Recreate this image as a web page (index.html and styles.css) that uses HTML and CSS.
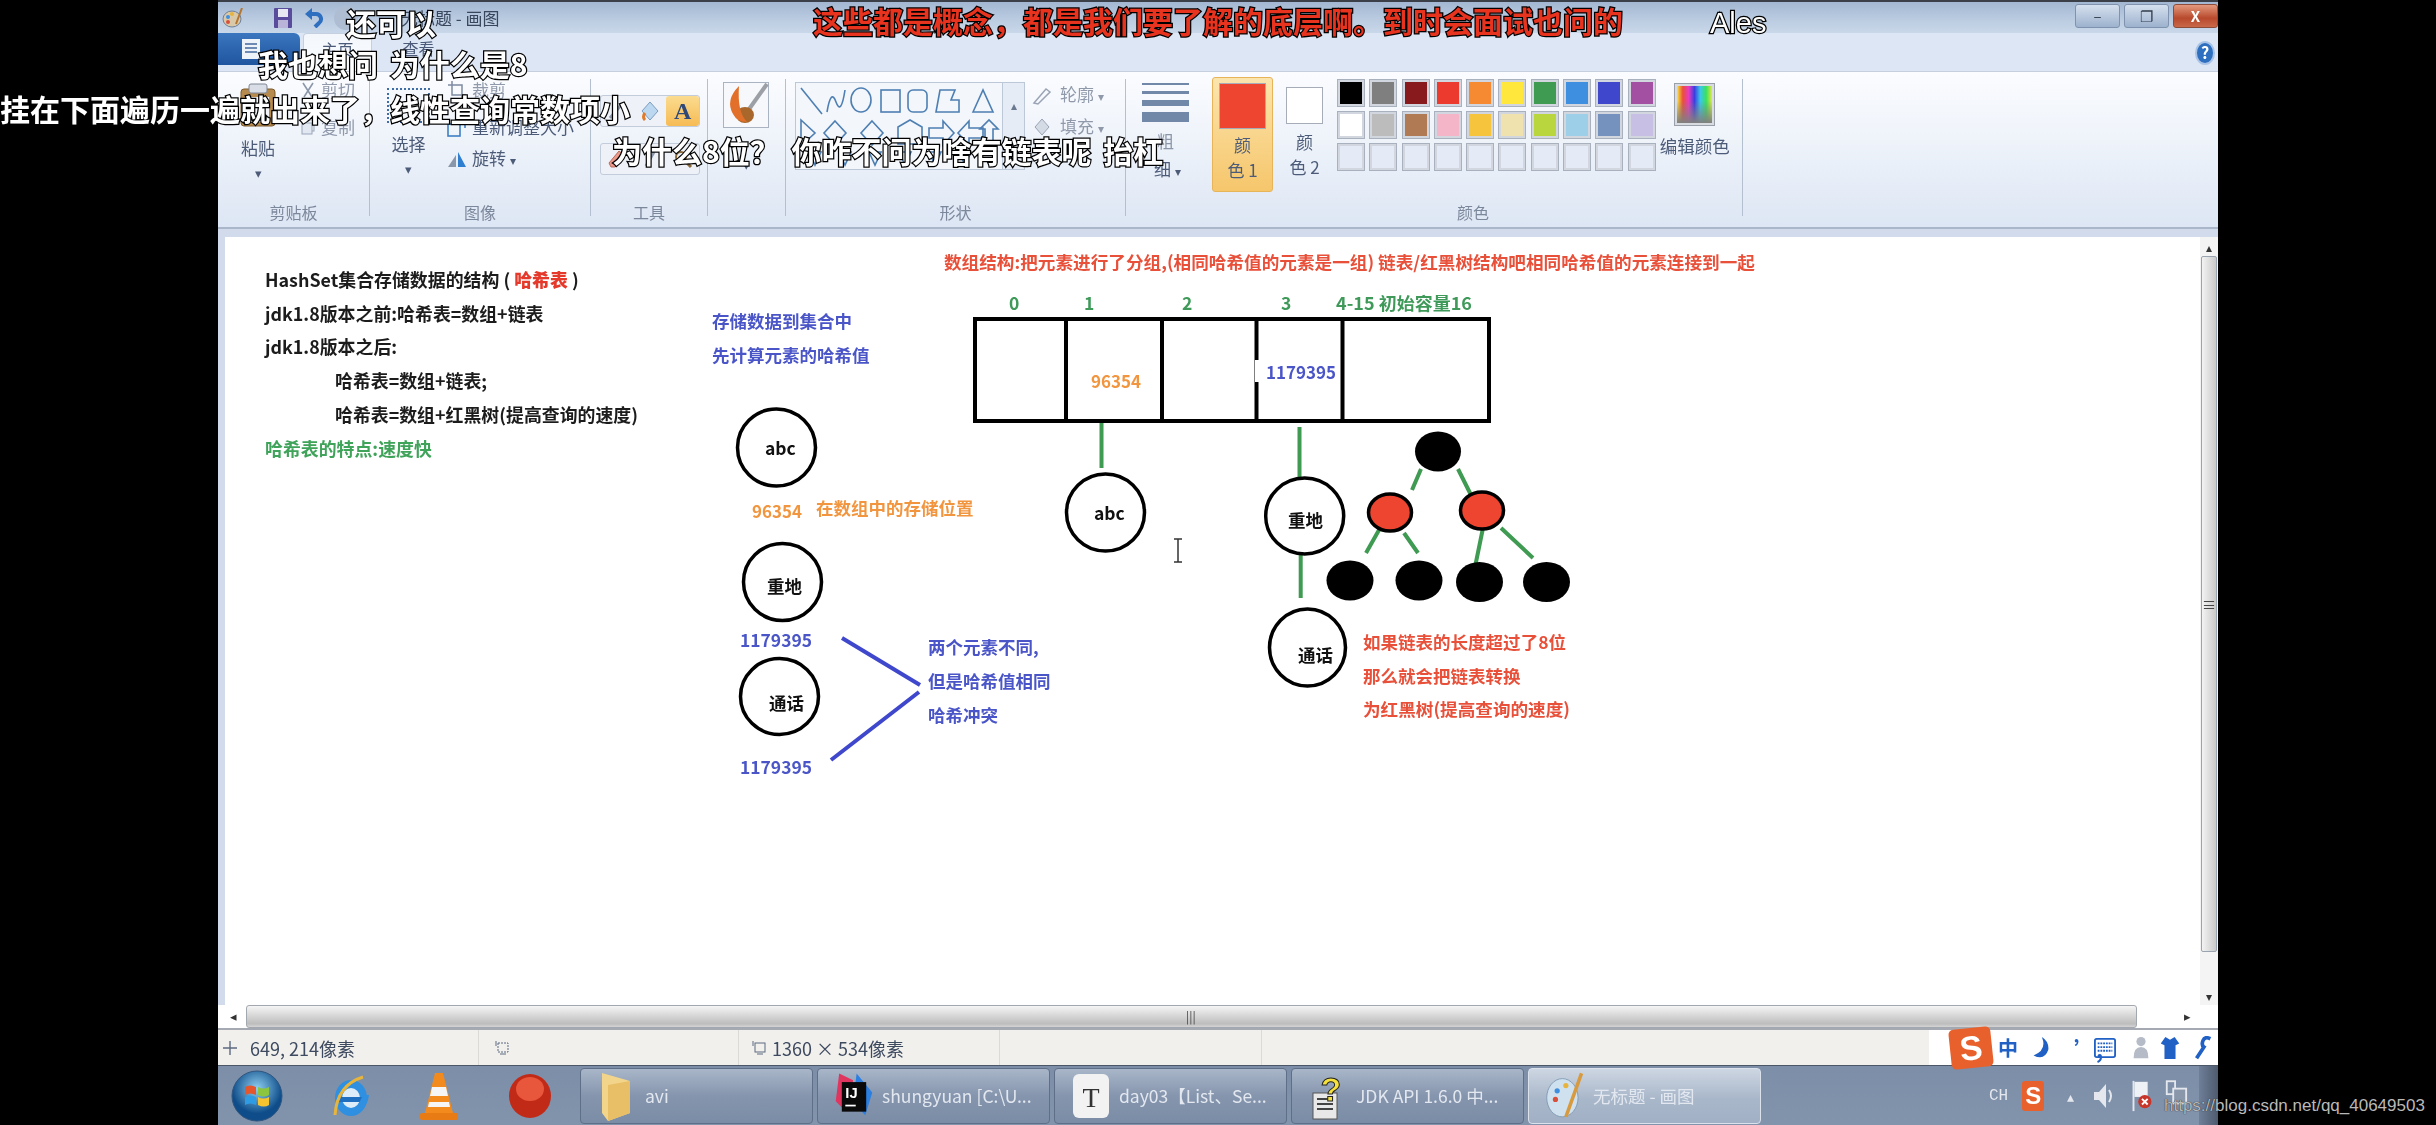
FILE: index.html
```html
<!DOCTYPE html>
<html lang="zh-CN">
<head>
<meta charset="utf-8">
<title>无标题 - 画图</title>
<link rel="stylesheet" href="styles.css">
</head>
<body>
<div class="stage">
  <div class="screen">
    <header class="titlebar">
      <svg class="qa qa-paint" viewBox="0 0 22 20"><ellipse cx="10" cy="11" rx="9" ry="8" fill="#d9c9a8" stroke="#6d7f99"/><circle cx="6" cy="9" r="2" fill="#3e8fe0"/><circle cx="10" cy="6" r="2" fill="#e8b33c"/><circle cx="6" cy="14" r="2" fill="#d9503a"/><path d="M20 0l-6 16" stroke="#b5752f" stroke-width="2"/></svg>
      <svg class="qa qa-save" viewBox="0 0 20 20"><rect x="1" y="0" width="18" height="20" rx="1" fill="#5a4c9c"/><rect x="5" y="1" width="10" height="8" fill="#e6e8f2"/><rect x="5" y="12" width="10" height="8" fill="#b9b4d8"/></svg>
      <svg class="qa qa-undo" viewBox="0 0 20 20"><path d="M3 6h9a5 5 0 0 1 3 9l-4 4" fill="none" stroke="#2f6fc0" stroke-width="4"/><path d="M8 0L1 6l7 6z" fill="#2f6fc0"/></svg>
      <span class="qa-redo"></span>
      <span class="wintitle">无标题 - 画图</span>
      <div class="winctl">
        <span class="wbtn">&#8211;</span>
        <span class="wbtn">&#10064;</span>
        <span class="wbtn wclose">X</span>
      </div>
    </header>

    <nav class="tabs">
      <span class="tab-file"><svg class="file-doc" viewBox="0 0 20 22"><rect x="1" y="1" width="18" height="20" fill="#eef3fa"/><path d="M4 6h12M4 10h12M4 14h12" stroke="#6d8ab5" stroke-width="2"/></svg></span>
      <span class="tab tab-on">主页</span>
      <span class="tab">查看</span>
      <svg class="help" viewBox="0 0 20 24"><ellipse cx="10" cy="12" rx="9" ry="11" fill="#2f6fc0" stroke="#a9c4e6" stroke-width="2"/><text x="10" y="18" text-anchor="middle" class="help-q">?</text></svg>
    </nav>

    <section class="ribbon">
      <div class="grp g-clip">
        <div class="grp-body">
          <div class="col-big col-paste">
            <svg class="ic-paste" viewBox="0 0 36 44"><rect x="1" y="6" width="34" height="37" rx="3" fill="#b78a4e" stroke="#7d5a2c"/><rect x="9" y="1" width="18" height="9" rx="2" fill="#d8dde6" stroke="#7f8794"/><rect x="7" y="14" width="22" height="25" fill="#f3f5f9"/></svg>
            <span class="rtxt big-label">粘贴</span>
            <span class="drop">&#9662;</span>
          </div>
          <div class="rows rows-clip">
            <span class="rrow"><svg class="ic16" viewBox="0 0 16 16"><path d="M3 1l9 14M13 1L4 15" stroke="#8c97a9" stroke-width="1.6"/></svg><span class="rtxt rtxt-dim">剪切</span></span>
            <span class="rrow"><svg class="ic16" viewBox="0 0 16 16"><rect x="4" y="1" width="10" height="11" fill="#eef2f8" stroke="#9aa6b8"/><rect x="2" y="4" width="10" height="11" fill="#e2e8f2" stroke="#9aa6b8"/></svg><span class="rtxt rtxt-dim">复制</span></span>
          </div>
        </div>
        <div class="grp-label">剪贴板</div>
      </div>

      <div class="grp g-image">
        <div class="grp-body">
          <div class="col-big col-select">
            <span class="ic-select"></span>
            <span class="rtxt big-label">选择</span>
            <span class="drop">&#9662;</span>
          </div>
          <div class="rows rows-image">
            <span class="rrow"><svg class="ic20" viewBox="0 0 20 20"><path d="M5 1v14h14M1 5h14v14" fill="none" stroke="#7d8ba3" stroke-width="1.5"/></svg><span class="rtxt rtxt-dim">裁剪</span></span>
            <span class="rrow"><svg class="ic20" viewBox="0 0 20 20"><rect x="1" y="7" width="12" height="12" fill="none" stroke="#3f7fc4" stroke-width="1.6"/><path d="M9 2h9v9" fill="none" stroke="#3f7fc4" stroke-width="1.6"/></svg><span class="rtxt">重新调整大小</span></span>
            <span class="rrow"><svg class="ic20" viewBox="0 0 20 20"><path d="M1 18L9 6v12z" fill="#8a97aa"/><path d="M11 3l8 15h-8z" fill="#2f7fd0"/></svg><span class="rtxt">旋转 <i class="drop-inline">&#9662;</i></span></span>
          </div>
        </div>
        <div class="grp-label">图像</div>
      </div>

      <div class="grp g-tools">
        <div class="grp-body tool-body">
          <div class="toolrow">
            <span class="tool"><svg class="ic20" viewBox="0 0 20 20"><path d="M3 17L15 3" stroke="#8c97a9" stroke-width="3"/></svg></span>
            <span class="tool"><svg class="ic20" viewBox="0 0 20 20"><path d="M10 1l8 9-8 9-8-9z" fill="#bcd7f0" stroke="#7d9cc0"/><path d="M5 12q-3 4 0 7" stroke="#e07b2e" stroke-width="3" fill="none"/></svg></span>
            <span class="tool tool-on">A</span>
          </div>
          <div class="toolrow">
            <span class="tool"><svg class="ic20" viewBox="0 0 20 20"><path d="M2 14L12 2l6 5L8 18H4z" fill="#eb9a8c" stroke="#b96a5c"/></svg></span>
            <span class="tool"><svg class="ic20" viewBox="0 0 20 20"><path d="M6 17L14 3" stroke="#8c97a9" stroke-width="3"/></svg></span>
            <span class="tool"><svg class="ic20" viewBox="0 0 20 20"><circle cx="8" cy="8" r="5" fill="#e8eef7" stroke="#8a6a3a" stroke-width="2"/><path d="M12 12l6 6" stroke="#8a6a3a" stroke-width="3"/></svg></span>
          </div>
        </div>
        <div class="grp-label">工具</div>
      </div>

      <div class="grp g-brush">
        <div class="grp-body col-big col-brush">
          <svg class="ic-brush" viewBox="0 0 46 46"><rect x=".5" y=".5" width="45" height="45" fill="#f6f8fb" stroke="#aab3c2"/><path d="M44 2L24 30" stroke="#9c9fa6" stroke-width="4"/><ellipse cx="22" cy="33" rx="9" ry="8" fill="#a9672c"/><path d="M16 4Q2 18 10 32q4 8 14 8Q14 30 16 4z" fill="#e2702a"/></svg>
          <span class="drop drop-brush">&#9662;</span>
        </div>
      </div>

      <div class="grp g-shapes">
        <div class="grp-body shapes-body">
          <svg class="ic-shapes" viewBox="0 0 208 88">
            <rect x=".5" y=".5" width="207" height="87" fill="#f3f6fb" stroke="#bcc7d8"/>
            <g fill="none" stroke="#4e7fb3" stroke-width="1.6">
              <path d="M6 6l21 26"/><path d="M32 30q4-24 9-10t9-12"/><ellipse cx="66" cy="18" rx="10" ry="12"/><rect x="86" y="8" width="19" height="22"/><rect x="113" y="8" width="19" height="22" rx="5"/><path d="M141 30l4-22h15l-4 10h8v12z"/><path d="M178 30l10-22 10 22z"/>
              <path d="M6 38v26l14-13z"/><path d="M40 39l11 12-11 12-11-12z"/><path d="M77 39l11 12-11 12-11-12z"/><path d="M103 45l12-7 12 7v17h-24z"/><path d="M134 46h14v-7l11 12-11 12v-7h-14z"/><path d="M188 46h-14v-7l-11 12 11 12v-7h14z"/><path d="M198 56v-9h5l-9-9-9 9h5v16h8z"/>
              <path d="M14 70l6 13 6-13zM44 70l6 13 6-13zM74 70l6 13 6-13zM104 70l6 13 6-13zM134 70l6 13 6-13zM164 70l6 13 6-13z"/>
            </g>
          </svg>
          <div class="shape-scroll"><span>&#9652;</span><span>&#9662;</span></div>
          <div class="rows rows-shape">
            <span class="rrow"><svg class="ic20" viewBox="0 0 20 20"><path d="M2 18L14 4l4 3-12 12z" fill="none" stroke="#9aa4b5" stroke-width="1.5"/></svg><span class="rtxt rtxt-dim">轮廓 <i class="drop-inline">&#9662;</i></span></span>
            <span class="rrow"><svg class="ic20" viewBox="0 0 20 20"><path d="M10 2l7 8-7 8-7-8z" fill="#d5dbe5" stroke="#9aa4b5"/></svg><span class="rtxt rtxt-dim">填充 <i class="drop-inline">&#9662;</i></span></span>
          </div>
        </div>
        <div class="grp-label">形状</div>
      </div>

      <div class="grp g-thick">
        <div class="grp-body col-big col-thick">
          <span class="tk tk1"></span><span class="tk tk2"></span><span class="tk tk3"></span><span class="tk tk4"></span>
          <span class="rtxt tk-label">粗</span>
          <span class="rtxt tk-label2">细 <i class="drop-inline">&#9662;</i></span>
        </div>
      </div>

      <div class="grp g-colors">
        <div class="grp-body colors-body">
          <div class="colorbtn colorbtn-on">
            <span class="cswatch cs-red"></span>
            <span class="rtxt">颜</span>
            <span class="rtxt">色 1</span>
          </div>
          <div class="colorbtn colorbtn-2">
            <span class="cswatch cs-white"></span>
            <span class="rtxt">颜</span>
            <span class="rtxt">色 2</span>
          </div>
          <div class="palette">
            <span class="sw c1"></span><span class="sw c2"></span><span class="sw c3"></span><span class="sw c4"></span><span class="sw c5"></span><span class="sw c6"></span><span class="sw c7"></span><span class="sw c8"></span><span class="sw c9"></span><span class="sw c10"></span>
            <span class="sw c11"></span><span class="sw c12"></span><span class="sw c13"></span><span class="sw c14"></span><span class="sw c15"></span><span class="sw c16"></span><span class="sw c17"></span><span class="sw c18"></span><span class="sw c19"></span><span class="sw c20"></span>
            <span class="sw"></span><span class="sw"></span><span class="sw"></span><span class="sw"></span><span class="sw"></span><span class="sw"></span><span class="sw"></span><span class="sw"></span><span class="sw"></span><span class="sw"></span>
          </div>
          <div class="editcol">
            <span class="rainbow"></span>
            <span class="rtxt">编辑颜色</span>
          </div>
        </div>
        <div class="grp-label">颜色</div>
      </div>
    </section>

    <main class="workspace">
      <div class="work-main">
        <div class="canvas">
          <div class="notes">
            <p>HashSet集合存储数据的结构 ( <b class="red">哈希表</b> )</p>
            <p>jdk1.8版本之前:哈希表=数组+链表</p>
            <p>jdk1.8版本之后:</p>
            <p class="ind">哈希表=数组+链表;</p>
            <p class="ind">哈希表=数组+红黑树(提高查询的速度)</p>
            <p class="green">哈希表的特点:速度快</p>
          </div>
          <svg class="diagram" viewBox="225 237 1975 768">
            <g class="ln-black">
              <rect x="975" y="319" width="514" height="102"/>
              <path d="M1066 319v102M1162 319v102M1256.5 319v102M1342.5 319v102"/>
            </g>
            <rect x="1255" y="360" width="5" height="22" fill="#fff"/>
            <g class="ln-green">
              <path d="M1101.5 423v45M1299.5 427v50M1300.7 555v43"/>
              <path d="M1421 469l-9 21M1458 469l13 26M1379 530l-13 23M1404 533l14 20M1483 528l-8 39M1501 528l32 30"/>
            </g>
            <g class="ln-blue"><path d="M842 638l78 47M919 692l-88 68"/></g>
            <g class="circ">
              <ellipse cx="776.500" cy="447.500" rx="39" ry="38.500"/>
              <ellipse cx="782.500" cy="582" rx="39" ry="38.500"/>
              <ellipse cx="779.500" cy="696.500" rx="39" ry="38"/>
              <ellipse cx="1105.500" cy="512.500" rx="39" ry="38.500"/>
              <ellipse cx="1304.700" cy="516" rx="39" ry="38"/>
              <ellipse cx="1307.500" cy="647.500" rx="38" ry="38.500"/>
            </g>
            <g fill="#000">
              <ellipse cx="1438" cy="451.500" rx="23" ry="20"/>
              <ellipse cx="1350" cy="580.500" rx="23.500" ry="20"/>
              <ellipse cx="1419" cy="580.500" rx="23.500" ry="20"/>
              <ellipse cx="1479.500" cy="582" rx="23.500" ry="20"/>
              <ellipse cx="1546.500" cy="582" rx="23.500" ry="20"/>
            </g>
            <g class="redn">
              <ellipse cx="1390" cy="512.500" rx="21.500" ry="18.500"/>
              <ellipse cx="1482" cy="510.500" rx="21.500" ry="18.500"/>
            </g>
            <path class="ibeam" d="M1174 539h8M1178 539v23M1174 562h8"/>

            <text class="dt t-red" x="944" y="263" textLength="811" lengthAdjust="spacingAndGlyphs">数组结构:把元素进行了分组,(相同哈希值的元素是一组) 链表/红黑树结构吧相同哈希值的元素连接到一起</text>
            <text class="dt t-green" x="1009" y="304">0</text>
            <text class="dt t-green" x="1084" y="304">1</text>
            <text class="dt t-green" x="1182" y="304">2</text>
            <text class="dt t-green" x="1281" y="304">3</text>
            <text class="dt t-green" x="1336" y="304" textLength="136" lengthAdjust="spacingAndGlyphs">4-15 初始容量16</text>
            <text class="dt t-orange" x="1091" y="382" textLength="50" lengthAdjust="spacingAndGlyphs">96354</text>
            <text class="dt t-blue" x="1266" y="373" textLength="70" lengthAdjust="spacingAndGlyphs">1179395</text>

            <text class="dt t-blue" x="712" y="322">存储数据到集合中</text>
            <text class="dt t-blue" x="712" y="356">先计算元素的哈希值</text>
            <text class="dt t-black" x="765" y="449">abc</text>
            <text class="dt t-orange" x="752" y="512" textLength="50" lengthAdjust="spacingAndGlyphs">96354</text>
            <text class="dt t-orange" x="816" y="509">在数组中的存储位置</text>
            <text class="dt t-black" x="767" y="587">重地</text>
            <text class="dt t-blue" x="740" y="641" textLength="72" lengthAdjust="spacingAndGlyphs">1179395</text>
            <text class="dt t-black" x="769" y="704">通话</text>
            <text class="dt t-blue" x="740" y="768" textLength="72" lengthAdjust="spacingAndGlyphs">1179395</text>
            <text class="dt t-blue" x="928" y="648">两个元素不同,</text>
            <text class="dt t-blue" x="928" y="682">但是哈希值相同</text>
            <text class="dt t-blue" x="928" y="716">哈希冲突</text>

            <text class="dt t-black" x="1094" y="514">abc</text>
            <text class="dt t-black" x="1288" y="521">重地</text>
            <text class="dt t-black" x="1298" y="656">通话</text>
            <text class="dt t-red" x="1363" y="643" textLength="203" lengthAdjust="spacingAndGlyphs">如果链表的长度超过了8位</text>
            <text class="dt t-red" x="1363" y="677">那么就会把链表转换</text>
            <text class="dt t-red" x="1363" y="710" textLength="207" lengthAdjust="spacingAndGlyphs">为红黑树(提高查询的速度)</text>
          </svg>
        </div>
        <div class="vscroll">
          <span class="sc-arrow">&#9652;</span>
          <div class="vthumb"><span class="grip-v">&#8801;</span></div>
          <span class="sc-arrow sc-bottom">&#9662;</span>
        </div>
      </div>
      <div class="hscroll">
        <span class="sc-arrow-h">&#9666;</span>
        <div class="hthumb"><span class="grip-h">|||</span></div>
        <span class="sc-arrow-h">&#9656;</span>
      </div>
    </main>

    <footer class="status">
      <div class="st st-pos"><svg class="ic16" viewBox="0 0 16 16"><path d="M8 1v14M1 8h14" stroke="#5c6a80" stroke-width="1.4"/></svg><span>649, 214像素</span></div>
      <div class="st st-sel"><svg class="ic16" viewBox="0 0 16 16"><rect x="4" y="3" width="10" height="9" fill="none" stroke="#5c6a80" stroke-dasharray="2 1"/><path d="M2 1v5M6 14h6" stroke="#5c6a80"/></svg></div>
      <div class="st st-size"><svg class="ic16" viewBox="0 0 16 16"><rect x="4" y="3" width="10" height="9" fill="none" stroke="#5c6a80"/><path d="M2 1v5M6 14h6" stroke="#5c6a80"/></svg><span>1360 × 534像素</span></div>
      <div class="st st-blank"></div>
      <div class="st st-blank2"></div>
      <div class="ime">
        <span class="ime-s">S</span>
        <span class="ime-i ime-zh">中</span>
        <svg class="ime-ic" viewBox="0 0 20 26"><path d="M12 1q6 14-9 20q12 6 16-6Q20 6 12 1z" fill="#2160c4"/></svg>
        <span class="ime-i ime-comma">&#8217;,</span>
        <svg class="ime-ic ime-kb" viewBox="0 0 24 22"><rect x="1" y="1" width="22" height="20" rx="2" fill="none" stroke="#2160c4" stroke-width="2"/><path d="M4 6h16M4 10h16M4 14h16" stroke="#2160c4" stroke-width="2" stroke-dasharray="2 1"/></svg>
        <svg class="ime-ic ime-person" viewBox="0 0 20 26"><circle cx="10" cy="6" r="5" fill="#b5bcc8"/><path d="M2 24q0-12 8-12t8 12z" fill="#b5bcc8"/></svg>
        <svg class="ime-ic ime-shirt" viewBox="0 0 22 26"><path d="M6 1l5 3 5-3 5 7-4 2v15H5V10L1 8z" fill="#2160c4"/></svg>
        <svg class="ime-ic" viewBox="0 0 20 26"><path d="M18 3q-6-3-8 2t1 7L3 24" fill="none" stroke="#2160c4" stroke-width="4"/></svg>
      </div>
    </footer>

    <div class="taskbar">
      <svg class="orb" viewBox="0 0 52 52"><defs><radialGradient id="orbg" cx=".5" cy=".35"><stop offset="0" stop-color="#8fd0f0"/><stop offset="1" stop-color="#0f4d8a"/></radialGradient></defs><circle cx="26" cy="26" r="25" fill="url(#orbg)" stroke="#30557f"/><path d="M14 17q5-3 11 0v8q-6-3-11 0z" fill="#e5562d"/><path d="M27 17q5 3 11 0v8q-5 3-11 0z" fill="#8cc63f"/><path d="M14 27q5-3 11 0v8q-6-3-11 0z" fill="#2f9be3"/><path d="M27 27q5 3 11 0v8q-5 3-11 0z" fill="#f7c42f"/></svg>
      <svg class="pin pin-ie" viewBox="0 0 44 50"><ellipse cx="22" cy="27" rx="16" ry="18" fill="#2f8fe0"/><ellipse cx="22" cy="27" rx="9" ry="10" fill="#dcecf9"/><rect x="10" y="26" width="25" height="5" fill="#1f6fc0"/><path d="M34 24h6q-2 16-16 20" fill="#2f8fe0"/><path d="M34 6Q8 14 6 44" fill="none" stroke="#e8b53c" stroke-width="3"/></svg>
      <svg class="pin pin-vlc" viewBox="0 0 44 50"><path d="M18 2h8l10 40H8z" fill="#f28a1d"/><path d="M15 16h14l2 9H13z" fill="#f5f5f5"/><path d="M12 31h20l1 5H11z" fill="#f5f5f5"/><rect x="3" y="42" width="38" height="7" rx="2" fill="#e87b14"/></svg>
      <svg class="pin pin-ball" viewBox="0 0 44 50"><ellipse cx="22" cy="25" rx="21" ry="22" fill="#c22a18"/><ellipse cx="22" cy="18" rx="14" ry="12" fill="#e8573c"/></svg>

      <div class="task">
        <svg class="task-ic" viewBox="0 0 34 50"><path d="M2 2l28 8v32L8 50 2 42z" fill="#f2d58a"/><path d="M8 14l22-4v32L8 50z" fill="#e8bf66"/></svg>
        <span>avi</span>
      </div>
      <div class="task">
        <svg class="task-ic" viewBox="0 0 46 56"><path d="M6 2l16 8-8 36L2 34z" fill="#e0355f"/><path d="M26 2l18 22-8 26-14-14z" fill="#2b7fe0"/><rect x="9" y="12" width="28" height="34" fill="#0a0a0a"/><text x="13" y="30" class="ij-t">IJ</text><rect x="13" y="38" width="12" height="2" fill="#fff"/></svg>
        <span>shungyuan [C:\U...</span>
      </div>
      <div class="task">
        <svg class="task-ic" viewBox="0 0 40 50"><rect x="2" y="3" width="36" height="44" rx="6" fill="#f2f2f2"/><text x="20" y="36" text-anchor="middle" class="t-t">T</text></svg>
        <span>day03【List、Se...</span>
      </div>
      <div class="task">
        <svg class="task-ic" viewBox="0 0 34 50"><rect x="2" y="22" width="24" height="26" fill="#e8e8e8" stroke="#555"/><path d="M6 28h16M6 33h16M6 38h16" stroke="#444" stroke-width="2"/><text x="20" y="30" text-anchor="middle" class="q-t">?</text></svg>
        <span>JDK API 1.6.0 中...</span>
      </div>
      <div class="task task-on">
        <svg class="task-ic" viewBox="0 0 46 56"><ellipse cx="20" cy="30" rx="18" ry="22" fill="#cfe1ee" stroke="#7d97b0"/><circle cx="12" cy="32" r="3" fill="#d9503a"/><circle cx="14" cy="22" r="3" fill="#3e8fe0"/><circle cx="24" cy="16" r="3" fill="#e8b33c"/><path d="M42 2L24 52" stroke="#d79a3f" stroke-width="4"/></svg>
        <span>无标题 - 画图</span>
      </div>

      <div class="tray">
        <span class="tray-ch">CH</span>
        <span class="tray-s">S</span>
        <span class="tray-up">&#9652;</span>
        <svg class="tray-ic tray-spk" viewBox="0 0 24 30"><path d="M2 11h5l7-8v24l-7-8H2z" fill="#e4e8ee"/><path d="M17 9q4 6 0 12" stroke="#e4e8ee" stroke-width="2" fill="none"/></svg>
        <svg class="tray-ic" viewBox="0 0 24 36"><path d="M3 2v32" stroke="#e4e8ee" stroke-width="2"/><path d="M4 3h14v16H4z" fill="#eef1f5"/><circle cx="15" cy="24" r="7" fill="#c8352a"/><path d="M12 21l6 6M18 21l-6 6" stroke="#fff" stroke-width="2"/></svg>
        <svg class="tray-ic tray-net" viewBox="0 0 26 36"><rect x="3" y="2" width="9" height="14" fill="none" stroke="#e4e8ee" stroke-width="2"/><rect x="10" y="10" width="14" height="16" fill="#8a97aa" stroke="#e4e8ee" stroke-width="2"/></svg>
      </div>
      <span class="showdesk"></span>
    </div>
  </div>

  <div class="dm dm-1">还可以</div>
  <div class="dm dm-2">我也想问 为什么是8</div>
  <div class="dm dm-3">挂在下面遍历一遍就出来了，线性查询常数项小</div>
  <div class="dm dm-4">为什么8位？ 你咋不问为啥有链表呢 抬杠</div>
  <div class="dm dm-red">这些都是概念，都是我们要了解的底层啊。到时会面试也问的</div>
  <div class="dm dm-ales">Ales</div>
  <div class="watermark">https://blog.csdn.net/qq_40649503</div>
</div>
</body>
</html>
```
FILE: styles.css
```css
* { box-sizing: border-box; }
html, body { margin: 0; padding: 0; background: #000; }
body { font-family: "Noto Sans CJK SC", "Noto Sans", sans-serif; }
.stage { position: relative; width: 2436px; height: 1125px; overflow: hidden; display: flex; justify-content: center; background: #000; }
.screen { width: 2000px; height: 1125px; display: flex; flex-direction: column; filter: blur(.55px); }

/* title bar */
.titlebar { height: 33px; flex: none; display: flex; align-items: center; border-top: 2px solid #3b4048; background: linear-gradient(180deg, #a3b7d2 0%, #bccde2 60%, #c9d7e9 100%); }
.qa { flex: none; display: block; }
.qa-paint { width: 22px; height: 20px; margin-left: 4px; }
.qa-save { width: 20px; height: 20px; margin-left: 29px; }
.qa-undo { width: 20px; height: 20px; margin-left: 11px; }
.qa-redo { width: 24px; height: 24px; margin-left: 10px; border-radius: 50%; background: #aebdd2; }
.wintitle { margin-left: 43px; font-size: 17px; color: #39465c; }
.winctl { margin-left: auto; display: flex; gap: 4px; align-self: flex-start; padding-top: 2px; }
.wbtn { width: 45px; height: 24px; border: 1px solid #7f93ae; border-radius: 3px; background: linear-gradient(180deg, #d5e0ee, #9db2cd); color: #333c4a; font-size: 15px; line-height: 22px; text-align: center; }
.wclose { background: linear-gradient(180deg, #e39a7e, #b8492c 60%, #c9694a); color: #fff; font-weight: 700; border-color: #8d4b3a; }

/* tabs */
.tabs { height: 38px; flex: none; display: flex; align-items: flex-end; background: #dde6f4; }
.tab-file { width: 82px; height: 32px; align-self: flex-start; border-radius: 0 6px 6px 0; background: linear-gradient(180deg, #3a76bf, #1f559e); display: flex; align-items: center; justify-content: center; }
.file-doc { width: 20px; height: 22px; margin-left: -16px; }
.tab { width: 69px; height: 38px; font-size: 16px; line-height: 30px; text-align: center; color: #4a5a78; }
.tab-on { margin-left: 3px; background: linear-gradient(180deg, #f3f7fc, #fafcfe); border: 1px solid #c4cfdf; border-bottom: 0; border-radius: 4px 4px 0 0; }
.tab-on + .tab { margin-left: 12px; }
.help { width: 20px; height: 24px; margin: 0 3px 6px auto; align-self: flex-end; }
.help-q { font-size: 16px; font-weight: 700; fill: #fff; }

/* ribbon */
.ribbon { height: 158px; flex: none; display: flex; border-top: 1px solid #c5cfdf; border-bottom: 2px solid #aab6c9; background: linear-gradient(180deg, #fbfcff 0%, #eef3fa 45%, #dde6f4 100%); }
.grp { flex: none; margin: 7px 0 10px; height: 137px; display: flex; flex-direction: column; border-right: 1px solid #b4bfcf; }
.grp-body { height: 123px; flex: none; display: flex; }
.grp-label { height: 20px; margin-bottom: -6px; text-align: center; font-size: 16px; line-height: 20px; color: #7b879b; }
.g-clip { width: 152px; }
.g-image { width: 221px; }
.g-tools { width: 117px; }
.g-brush { width: 78px; }
.g-shapes { width: 340px; }
.g-thick { width: 78px; border-right: 0; }
.g-colors { width: 539px; }
.rtxt { font-size: 17px; line-height: 22px; color: #4c5b78; white-space: nowrap; }
.rtxt-dim { color: #8f99aa; }
.col-big { display: flex; flex-direction: column; align-items: center; }
.col-paste { width: 36px; margin-left: 22px; padding-top: 4px; }
.ic-paste { width: 36px; height: 44px; display: block; }
.big-label { margin-top: 10px; }
.drop { font-size: 13px; line-height: 14px; margin-top: 7px; color: #4c5b78; }
.drop-inline { font-style: normal; font-size: 12px; }
.rows { display: flex; flex-direction: column; }
.rrow { display: flex; align-items: center; gap: 5px; height: 22px; }
.ic16 { width: 16px; height: 16px; flex: none; display: block; }
.ic20 { width: 20px; height: 20px; flex: none; display: block; }
.rows-clip { margin-left: 24px; gap: 15px; }
.col-select { width: 43px; margin-left: 17px; padding-top: 9px; }
.ic-select { width: 43px; height: 35px; border: 2px dotted #3f6ea6; background: #f4f7fc; }
.rows-image { margin-left: 17px; }
.rows-image .rrow { margin-bottom: 15px; }
.rows-image .rrow + .rrow { margin-bottom: 10px; }
.tool-body { flex-direction: column; padding: 16px 0 0 9px; gap: 16px; }
.toolrow { width: 100px; height: 32px; display: flex; border: 1px solid #c3ccda; border-radius: 3px; background: #eef2f8; }
.tool { flex: 1; display: flex; align-items: center; justify-content: center; font-family: "Liberation Serif", serif; font-size: 24px; font-weight: 700; color: #2f4a78; }
.tool-on { background: linear-gradient(180deg, #fbdc8f, #f6bb55); border-radius: 3px; }
.col-brush { padding-top: 3px; }
.ic-brush { width: 46px; height: 46px; display: block; margin-left: -2px; }
.drop-brush { margin-top: 30px; }
.shapes-body { padding: 3px 0 0 9px; }
.ic-shapes { width: 208px; height: 88px; display: block; flex: none; }
.shape-scroll { width: 22px; height: 88px; border: 1px solid #bcc7d8; border-left: 0; display: flex; flex-direction: column; justify-content: space-around; align-items: center; font-size: 12px; color: #6a7890; background: #e6ecf6; }
.rows-shape { margin-left: 7px; padding-top: 2px; gap: 10px; }
.rows-shape .rrow { gap: 8px; }
.col-thick { height: 123px; padding: 4px 15px 0 16px; align-items: stretch; }
.tk { display: block; background: #7288a8; flex: none; }
.tk1 { height: 2px; }
.tk2 { height: 3px; margin-top: 6px; }
.tk3 { height: 6px; margin-top: 6px; }
.tk4 { height: 10px; margin-top: 6px; }
.tk-label { margin-top: 8px; text-align: center; color: #8b96a8; }
.tk-label2 { margin-top: 6px; padding-left: 12px; }
.colors-body { padding-left: 8px; }
.colorbtn { display: flex; flex-direction: column; align-items: center; flex: none; }
.colorbtn-on { width: 61px; height: 115px; margin-top: -2px; padding-top: 6px; border: 1px solid #e8b45a; border-radius: 3px; background: linear-gradient(180deg, #fbe5ae, #f6c66b); }
.colorbtn-2 { width: 35px; margin-left: 14px; padding-top: 9px; }
.cswatch { display: block; flex: none; margin-bottom: 4px; outline: 1px solid #a7adb8; }
.colorbtn-2 .cswatch { margin-bottom: 6px; }
.colorbtn .rtxt { line-height: 25px; }
.cs-red { width: 45px; height: 44px; background: #ee4530; }
.cs-white { width: 35px; height: 35px; background: #fff; }
.palette { margin-left: 15px; display: grid; grid-template-columns: repeat(10, 28px); grid-auto-rows: 28px; column-gap: 4.3px; row-gap: 4px; flex: none; }
.sw { display: block; border: 3px solid #d2d7df; outline: 1px solid #a9b1bf; outline-offset: -1px; background: #e4ebf6; }
.c1 { background: #000; } .c2 { background: #7f7f7f; } .c3 { background: #881a1e; } .c4 { background: #ed3a2e; } .c5 { background: #f58a33; }
.c6 { background: #ffe73c; } .c7 { background: #3f9a52; } .c8 { background: #3e8fe0; } .c9 { background: #3f48cc; } .c10 { background: #a350a3; }
.c11 { background: #fff; } .c12 { background: #bcbcbc; } .c13 { background: #b07a55; } .c14 { background: #f5b5c8; } .c15 { background: #f7c43d; }
.c16 { background: #efe2ae; } .c17 { background: #b9d63f; } .c18 { background: #9dd0e8; } .c19 { background: #7492bd; } .c20 { background: #c8c0e4; }
.editcol { width: 70px; margin-left: 4px; display: flex; flex-direction: column; align-items: center; flex: none; padding-top: 4px; }
.rainbow { width: 41px; height: 43px; display: block; border: 3px solid #d8dbe0; outline: 1px solid #9aa0aa; outline-offset: -1px; background: linear-gradient(180deg, transparent 40%, #808080 100%), linear-gradient(90deg, #f6e83a, #e8503a, #e93ac0, #3a3fe0, #3ac8e8, #3ae060, #e8e83a); margin-bottom: 9px; }
.editcol .rtxt { font-size: 17.500px; }

/* workspace */
.workspace { flex: 1; min-height: 0; display: flex; flex-direction: column; background: #d2dbeb; padding-top: 8px; }
.work-main { flex: 1; min-height: 0; display: flex; padding-left: 7px; }
.canvas { flex: 1; position: relative; background: #fff; overflow: hidden; }
.notes { padding: 26px 0 0 40px; font-size: 17.900px; line-height: 33.700px; font-weight: 700; color: #1c1c1c; }
.notes p { margin: 0; white-space: nowrap; position: relative; z-index: 1; }
.notes .ind { padding-left: 70px; }
.notes .red { color: #e53a2b; }
.notes .green { color: #3fa35a; }
.diagram { position: absolute; left: 0; top: 0; width: 1975px; height: 768px; }
.ln-black { fill: none; stroke: #000; stroke-width: 4; }
.ln-green { stroke: #3f9a52; stroke-width: 4; fill: none; }
.ln-blue { stroke: #3f48cc; stroke-width: 4; fill: none; }
.circ { fill: #fff; stroke: #000; stroke-width: 3.500; }
.redn { fill: #ee4530; stroke: #000; stroke-width: 3.500; }
.ibeam { fill: none; stroke: #333; stroke-width: 1.500; }
.dt { font-family: "Noto Sans CJK SC", "Noto Sans", sans-serif; font-size: 17.500px; font-weight: 700; dominant-baseline: central; transform: translateY(-1.5px); }
.t-red { fill: #e8503a; }
.t-green { fill: #3f9a5a; }
.t-orange { fill: #f2953f; }
.t-blue { fill: #4a55c8; }
.t-black { fill: #111; }
.vscroll { width: 18px; flex: none; display: flex; flex-direction: column; align-items: center; background: #f4f4f4; }
.sc-arrow { height: 19px; font-size: 12px; line-height: 19px; color: #333; flex: none; }
.sc-bottom { margin-top: auto; }
.vthumb { flex: none; height: 696px; width: 16px; margin: 0 1px; border: 1px solid #9aa3b0; border-radius: 2px; background: linear-gradient(90deg, #f3f3f3, #c9c9c9); display: flex; align-items: center; justify-content: center; font-size: 14px; color: #444; }
.grip-v { line-height: 1; }
.hscroll { height: 25px; flex: none; display: flex; align-items: stretch; background: #fff; padding-left: 2px; padding-right: 18px; border-bottom: 2px solid #a4a9b2; }
.sc-arrow-h { width: 26px; font-size: 13px; line-height: 22px; text-align: center; color: #333; flex: none; }
.hthumb { flex: 1; margin-right: 37px; border: 1px solid #a3a7af; border-radius: 3px; background: linear-gradient(180deg, #f5f5f5, #bdbdbd 85%, #d5d5d5); position: relative; font-size: 12px; line-height: 20px; color: #444; }
.grip-h { position: absolute; left: 939px; top: 0; }

/* status */
.status { height: 35px; flex: none; display: flex; background: #f2f0ed; font-size: 18px; color: #3d4a60; align-items: stretch; }
.st { display: flex; align-items: center; gap: 5px; border-right: 1px solid #dcdad6; flex: none; white-space: nowrap; }
.st-pos { width: 261px; padding-left: 4px; gap: 12px; }
.st-sel { width: 260px; padding-left: 15px; }
.st-size { width: 261px; padding-left: 12px; }
.st-blank { width: 262px; }
.st-blank2 { width: 667px; border-right: 0; }
.ime { flex: 1; display: flex; align-items: center; gap: 11px; justify-content: flex-end; padding-right: 4px; background: #fff; }
.ime-s { width: 42px; height: 40px; margin: -5px -5px -5px 0; position: relative; z-index: 2; border-radius: 5px; background: #e8602c; color: #fff; font: 700 34px/40px "Liberation Sans", sans-serif; text-align: center; transform: rotate(-6deg); }
.ime-i { font-size: 20px; font-weight: 700; color: #2160c4; }
.ime-comma { width: 14px; font-size: 22px; margin-left: 12px; }
.ime-ic { height: 24px; width: 22px; display: block; flex: none; }
.ime-kb { margin-left: -5px; }
.ime-person { margin-left: 3px; }
.ime-shirt { margin-left: -4px; }

/* taskbar */
.taskbar { height: 60px; flex: none; display: flex; align-items: center; border-top: 1px solid #4b5666; background: linear-gradient(180deg, #7d8ea8, #8293ac); }
.orb { width: 52px; height: 52px; margin-left: 13px; flex: none; }
.pin { width: 44px; height: 50px; flex: none; }
.pin-ie { margin-left: 46px; }
.pin-vlc { margin-left: 44px; }
.pin-ball { margin-left: 47px; }
.task { width: 233px; height: 56px; flex: none; margin-left: 4px; display: flex; align-items: center; gap: 8px; padding-left: 16px; border: 1px solid #5f6f88; border-radius: 4px; background: linear-gradient(180deg, #a9b6c9 0%, #8595ad 50%, #7b8ca6 100%); font-size: 17.500px; color: #e3e8f0; white-space: nowrap; overflow: hidden; }
.pin-ball + .task { margin-left: 28px; }
.task-ic { width: 40px; height: 50px; flex: none; }
.task-on { background: linear-gradient(180deg, #cdd6e2 0%, #a9b7ca 55%, #a1b0c5 100%); border-color: #dbe2ec; }
.ij-t { font: 700 17px "Liberation Sans", sans-serif; fill: #fff; }
.t-t { font: 400 28px "Liberation Serif", serif; fill: #333; }
.q-t { font: 700 34px "Liberation Sans", sans-serif; fill: #f6e13c; stroke: #222; stroke-width: 1; }
.tray { margin-left: 228px; display: flex; align-items: center; gap: 14px; flex: none; color: #e4e8ee; font-size: 15px; }
.tray-ch { font-family: "Liberation Mono", monospace; font-size: 16px; }
.tray-s { width: 22px; height: 30px; border-radius: 3px; background: #e8602c; color: #fff; font: 700 24px/30px "Liberation Sans", sans-serif; text-align: center; }
.tray-up { font-size: 14px; margin-left: 9px; }
.tray-ic { width: 24px; height: 34px; flex: none; display: block; }
.tray-spk { margin-left: 4px; }
.tray-net { margin-left: -4px; }
.showdesk { margin-left: auto; width: 19px; height: 59px; flex: none; background: linear-gradient(90deg, #6f7f98, #4e5a6e); }

/* danmaku */
.dm { position: absolute; font-family: "Noto Sans CJK SC", sans-serif; font-size: 30px; line-height: 40px; font-weight: 700; color: #fff; white-space: nowrap; -webkit-text-stroke: 2.500px #000; paint-order: stroke fill; filter: blur(.3px); word-spacing: 5px; }
.dm-1 { left: 346px; top: 2px; }
.dm-2 { left: 258px; top: 43px; }
.dm-3 { left: 0; top: 88px; }
.dm-4 { left: 612px; top: 130px; }
.dm-red { left: 813px; top: 0; color: #e8331f; }
.dm-ales { left: 1710px; top: 3px; font-family: "Liberation Sans", sans-serif; font-size: 29px; font-weight: 400; }
.watermark { position: absolute; left: 2164px; top: 1094px; font-family: "Liberation Sans", sans-serif; font-size: 17px; line-height: 24px; color: #b9b9b9; white-space: nowrap; text-shadow: 0 0 1px #000; }
```
